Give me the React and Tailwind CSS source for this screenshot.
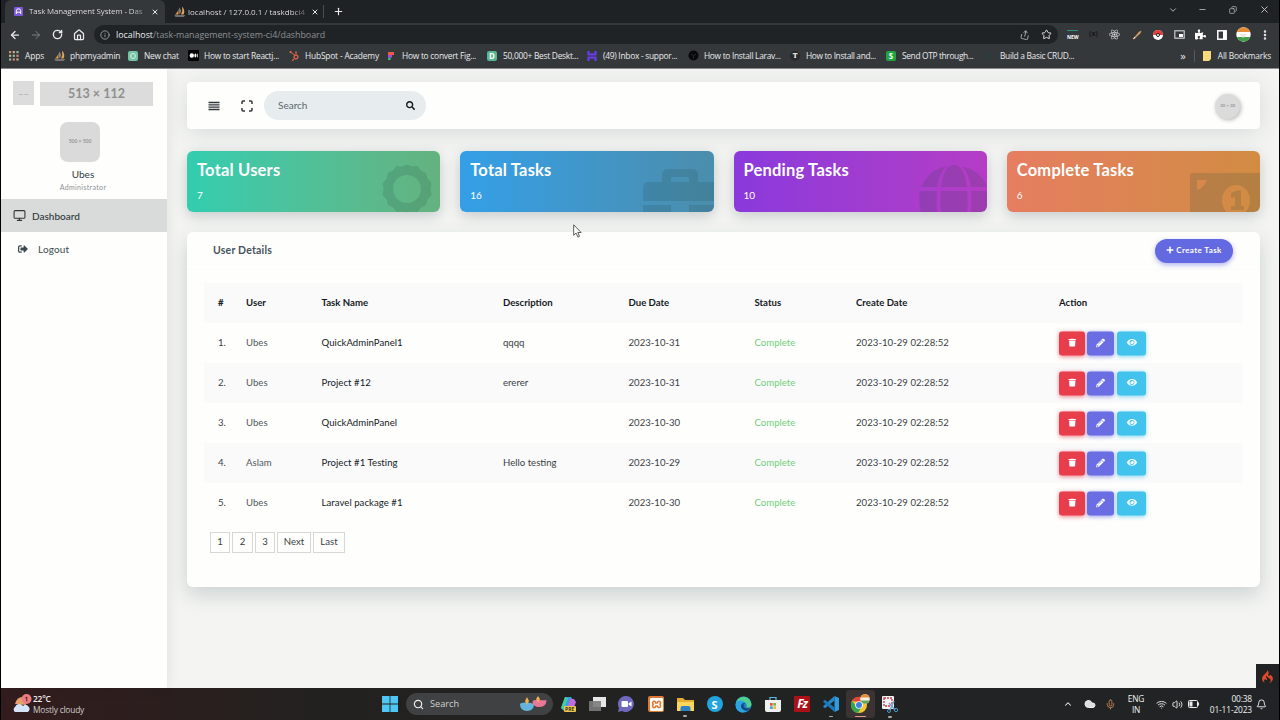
import React from "react";
import {
  FaTrash, FaPencilAlt, FaEye, FaPlus, FaSearch, FaSignOutAlt, FaHubspot,
  FaReact, FaPuzzlePiece,
} from "react-icons/fa";
import { SiCodeigniter, SiXampp } from "react-icons/si";
import {
  ArrowLeft, ArrowRight, RotateCw, House, Info, Share, Star, ChevronDown, ChevronUp,
  Minus, X, Plus, Copy, EllipsisVertical, Monitor, Search, Wifi, Volume2,
  Bell, Mic, Cloud,
} from "lucide-react";

const UI = "font-['Open_Sans','Noto_Sans',sans-serif]";

function Tab({ active, icon, title, width, tracking }) {
  return (
    <div className={`flex h-[23px] items-center pl-[9px] ${width} ${active ? "rounded-t-[6px] bg-[#35383a]" : ""}`}>
      <span className="flex w-[15px] shrink-0 items-center">{icon}</span>
      <span className={`flex-1 whitespace-nowrap bg-gradient-to-r from-[#e8eaed] from-88% to-[#e8eaed50] bg-clip-text text-transparent ${tracking}`}>
        {title}
      </span>
      <X size={8} strokeWidth={3} className="mx-[6px] shrink-0 text-[#e8eaed]" />
    </div>
  );
}

const sail = (
  <svg width="12" height="11" viewBox="0 0 12 11">
    <path d="M4.500.5Q5 5 1 8.500h3.500z" fill="#e39a48" />
    <path d="M5.300 1.500Q8 5 5.500 8.500z" fill="#b8b4ab" />
    <path d="M8 .5q3.500 4 1.500 8H7Q9 5 8 .5z" fill="#e0a35c" />
    <path d="M.3 9.200h11l-1.500 1.500H1.500z" fill="#8d8a84" />
  </svg>
);
const tile = (cls, ch) => (
  <span className={`flex h-[10px] w-[10px] items-center justify-center rounded-[2px] text-[8px] font-bold leading-none text-white ${cls}`}>{ch}</span>
);

const bookmarks = [
  { w: "w-[45px]", t: "Apps", tr: "tracking-[-0.1px]", icon: (
    <svg width="10" height="10" viewBox="0 0 10 10">
      {[0, 1, 2].map((r) => [0, 1, 2].map((c) => (
        <rect key={`${r}${c}`} x={c * 3.7} y={r * 3.7} width="2.2" height="2.2" fill={["#d98880", "#c9b27c", "#8fb996"][(r + c) % 3]} />
      )))}
    </svg>
  ) },
  { w: "w-[74px]", t: "phpmyadmin", tr: "tracking-[-0.18px]", icon: sail },
  { w: "w-[60px]", t: "New chat", tr: "tracking-[-0.2px]", icon: tile("bg-[#74c3a4]", <span className="h-[6px] w-[6px] rounded-full border border-white/70" />) },
  { w: "w-[101px]", t: "How to start Reactj...", tr: "tracking-[-0.25px]", icon: (
    <svg width="11" height="11" viewBox="0 0 11 11"><rect width="11" height="11" rx="1" fill="#000" /><circle cx="3.8" cy="5.5" r="2.2" fill="#fff" /><ellipse cx="7.4" cy="5.5" rx="1" ry="2" fill="#fff" /><rect x="9" y="3.7" width=".7" height="3.6" fill="#fff" /></svg>
  ) },
  { w: "w-[97px]", t: "HubSpot - Academy", tr: "tracking-[-0.18px]", icon: <FaHubspot size={10} className="text-[#e8674a]" /> },
  { w: "w-[101px]", t: "How to convert Fig...", tr: "tracking-[-0.25px]", icon: (
    <svg width="10" height="10" viewBox="0 0 10 10"><path d="M2 1h6v3H2z" fill="#ee5a4a" /><path d="M2 4h4v2.6H2z" fill="#a54be0" /><path d="M2 6.6h2.6V9H2z" fill="#35b979" /></svg>
  ) },
  { w: "w-[100px]", t: "50,000+ Best Deskt...", tr: "tracking-[-0.27px]", icon: tile("bg-[#58b893]", "D") },
  { w: "w-[101px]", t: "(49) Inbox - suppor...", tr: "tracking-[-0.27px]", icon: (
    <svg width="10" height="10" viewBox="0 0 10 10" stroke="#673de6" strokeWidth="2.2" fill="none"><path d="M1.5 0v3.300h7V0M1.500 10V6.700h7V10" /></svg>
  ) },
  { w: "w-[102px]", t: "How to Install Larav...", tr: "tracking-[-0.3px]", icon: (
    <svg width="11" height="11" viewBox="0 0 11 11"><circle cx="5.5" cy="5.5" r="5" fill="#08090a" /><path d="M3 4.200 5.500 5.800 8 4.200M5.500 5.800V9" stroke="#333" strokeWidth=".7" fill="none" /></svg>
  ) },
  { w: "w-[96px]", t: "How to Install and...", tr: "tracking-[-0.35px]", icon: tile("rounded-full bg-[#27292b] font-serif", "T") },
  { w: "w-[98px]", t: "Send OTP through...", tr: "tracking-[-0.35px]", icon: tile("bg-[#1fa53f]", "S") },
  { w: "w-[100px]", t: "Build a Basic CRUD...", tr: "tracking-[-0.3px]", icon: <span className="ml-[1px] h-[7px] w-[7px] rounded-full border border-[#24414a]" /> },
];

function Browser() {
  return (
    <header className={`${UI} bg-[#1f2224] text-[#e8eaed]`}>
      <div className="flex h-[23px] items-center pl-[4px]">
        <Tab active width="w-[160px]" tracking="text-[7.900px] tracking-[-0.12px]" title="Task Management System - Das"
          icon={<svg width="9" height="9" viewBox="0 0 9 9"><rect width="9" height="9" rx="1" fill="#7a57dd" /><path d="M2.300 7V3.800a2.200 2 0 0 1 4.400 0V7M2.300 5.200h4.400" stroke="#fff" strokeWidth="1" fill="none" /></svg>} />
        <Tab width="w-[158px]" tracking="-ml-px text-[8px]" title="localhost / 127.0.0.1 / taskdbci4" icon={sail} />
        <span className="h-[13px] w-px bg-[#4b4e50]" />
        <Plus size={11} strokeWidth={2.500} className="ml-[9px]" />
        <div className="ml-auto mb-[4px] flex items-center pr-[9px] text-[#c9cccf]">
          <ChevronDown size={10} />
          <Minus size={9} className="ml-[20px]" />
          <Copy size={8} className="ml-[22px] -scale-x-100" />
          <X size={11} className="ml-[22px]" />
        </div>
      </div>
      <div className="flex h-[23px] items-center bg-[#35383a] pl-[8px]">
        <ArrowLeft size={12} strokeWidth={2.500} />
        <ArrowRight size={12} className="ml-[9px] text-[#7d8083]" />
        <RotateCw size={11} strokeWidth={3} className="ml-[10px]" />
        <House size={12} strokeWidth={2.500} className="ml-[10px]" />
        <div className="ml-[9px] flex h-[19px] w-[964px] items-center rounded-full bg-[#202325] pl-[6px] pr-[6px]">
          <Info size={10} className="text-[#a9acaf]" />
          <span className="ml-[6px] text-[8.900px] tracking-[-0.02px] text-[#8b9194]"><span className="text-[#e8eaed]">localhost</span>/task-management-system-ci4/dashboard</span>
          <Share size={10} className="ml-auto rotate-12 text-[#b0b3b6]" />
          <Star size={11} className="ml-[11px]" />
        </div>
        <div className="flex flex-1 items-center">
          <span className="ml-[9px] flex h-[10px] w-[11px] flex-col justify-end border-t border-[#2f8f83] text-[5px] font-bold leading-[5px] text-white">NEW</span>
          <span className="ml-[10px] w-[11px] text-center text-[7px] font-bold text-[#151718]">(x)</span>
          <FaReact size={11} className="ml-[10px]" />
          <svg width="10" height="10" viewBox="0 0 10 10" className="ml-[12px]"><path d="M1 9 7 2.200 9 1 8.200 3.200 2.500 8.600z" fill="#d9a066" stroke="#d9a066" strokeWidth=".6" /><path d="M1 9l1.500-2L3.400 8z" fill="#fff" /></svg>
          <svg width="12" height="12" viewBox="0 0 12 12" className="ml-[10px]"><circle cx="6" cy="6" r="5" fill="#fff" /><path d="M1 6a5 5 0 0 1 10 0z" fill="#e23b3b" /><circle cx="6" cy="6" r="1.500" fill="#fff" stroke="#222" /></svg>
          <svg width="11" height="9" viewBox="0 0 11 9" className="ml-[10px]"><rect width="11" height="9" rx="1" fill="#aeb1b4" /><rect x="1.500" y="1.500" width="8" height="6" fill="#35383a" /><rect x="5" y="4" width="4" height="3" fill="#fff" /></svg>
          <FaPuzzlePiece size={11} className="ml-[10px] text-white" />
          <svg width="10" height="10" viewBox="0 0 10 10" className="ml-[11px]"><rect x=".8" y=".8" width="8.400" height="8.400" fill="none" stroke="#fff" strokeWidth="1.500" /><rect x="6" y="1" width="3" height="8" fill="#fff" /></svg>
          <svg width="15" height="15" viewBox="0 0 15 15" className="ml-[9px]"><circle cx="7.500" cy="7.500" r="7.200" fill="#fff" /><path d="M.8 5a7.200 7.200 0 0 1 13.400 0z" fill="#e88b35" /><path d="M.8 10a7.200 7.200 0 0 0 13.400 0z" fill="#43a047" /><path d="M4 7h7l-4 4z" fill="#ece4d8" /></svg>
          <EllipsisVertical size={12} strokeWidth={3} className="ml-[8px]" />
        </div>
      </div>
      <div className="flex h-[23px] items-center border-b border-[#8d8d90] bg-[#35383a] pb-[2px] pl-[8px] text-[8.400px]">
        {bookmarks.map((b) => (
          <div key={b.t} className={`flex shrink-0 items-center whitespace-nowrap ${b.w}`}>
            <span className="flex w-[16px] shrink-0">{b.icon}</span>
            <span className={b.tr}>{b.t}</span>
          </div>
        ))}
        <span className="ml-auto -mt-[2px] mr-[8px] text-[11px] leading-none">»</span>
        <span className="h-[12px] w-px bg-[#55585b]" />
        <svg width="9" height="10" viewBox="0 0 9 10" className="ml-[8px]"><path d="M0 0h8v8l-2 2H0z" fill="#f8da7c" /></svg>
        <span className="ml-[6px] mr-[8px] tracking-[-0.2px]">All Bookmarks</span>
      </div>
    </header>
  );
}

function Sidebar() {
  return (
    <aside className="relative z-10 flex w-[166px] shrink-0 flex-col bg-[#fefefc] pt-[12px] shadow-[2px_0_12px_rgba(0,0,0,0.07)]">
      <div className="flex pl-[12px]">
        <div className="flex h-[24px] w-[21px] items-center justify-center bg-[#dcdcdc] text-[6px] tracking-tighter text-[#888]">— —</div>
        <div className="ml-[6px] mt-[1px] flex h-[24px] w-[113px] items-center justify-center bg-[#dcdcdc] text-[12.500px] font-bold text-[#8f8f8f]">513 × 112</div>
      </div>
      <div className="ml-[59px] mt-[16px] flex h-[40px] w-[40px] items-center justify-center rounded-[8px] bg-[#dadada] text-[5px] font-bold text-[#999]">500 × 500</div>
      <div className="mt-[5px] pr-[2px] text-center text-[10px] leading-[14px] text-[#2f3a44]">Ubes</div>
      <div className="h-[18px] pr-[2px] text-center text-[7px] leading-[13px] tracking-[0.350px] text-[#8d9196]">Administrator</div>
      <div className="flex h-[33px] items-center bg-[#d8dbda] pl-[12px] text-[10px] font-medium text-[#2f3739]">
        <Monitor size={13} strokeWidth={2} />
        <span className="ml-[6px] mt-[2px]">Dashboard</span>
      </div>
      <div className="flex h-[34px] items-center pl-[17px] text-[10px] text-[#3c4a50]">
        <FaSignOutAlt size={10} />
        <span className="ml-[10px] mt-[1px] tracking-[0.120px]">Logout</span>
      </div>
    </aside>
  );
}

const cards = [
  { title: "Total Users", n: 7, cls: "from-[#31cdb0] to-[#64b27f]", art: (
    <g transform="translate(220 38)">
      <path fillRule="evenodd" d="M0-24.500 5-22.500 10.500-23 14-18.500 19-16 20.500-10.500 24.500-6 23.500 0 24.500 6 20.500 10.500 19 16 14 18.500 10.500 23 5 22.500 0 24.500-5 22.500-10.500 23-14 18.500-19 16-20.500 10.500-24.500 6-23.500 0-24.500-6-20.500-10.500-19-16-14-18.500-10.500-23-5-22.500ZM0-14a14 14 0 1 0 0 28 14 14 0 1 0 0-28Z" />
    </g>
  ) },
  { title: "Total Tasks", n: 16, cls: "from-[#339fe7] to-[#4b8dac]", art: (
    <path fillRule="evenodd" d="M188 31h14v-7q0-6 6-6h24q6 0 6 6v7h16v19H183V37q0-6 5-6zM211 26v5h18v-5zM183 54h28v7h-28zM229 54h25v7h-25z" />
  ) },
  { title: "Pending Tasks", n: 10, cls: "from-[#8a39dc] to-[#b53cc5]", art: (
    <path d="M187.500 36Q194 19 212 15.500 205 23 203 36zM207 36Q210 14 220 14T233 36zM228 15.500Q246 19 253 36H237Q235 23 228 15.500zM186 40h17q-1 10 0 21h-16q-3-11-1-21zM207 40h26q1 10 0 21h-26q-1-11 0-21zM237 40h17v21h-17q1-11 0-21z" />
  ) },
  { title: "Complete Tasks", n: 6, cls: "from-[#e67d60] to-[#d18c42]", art: (
    <g>
      <path fillRule="evenodd" d="M183 25q0-3 3-3h68v39h-71zM190 29v10q7-2 10-10zM229 34a14 15.500 0 1 0 .01 31 14 15.500 0 1 0-.01-31z" />
      <path d="M224 42 230 39.500h4V55h3v4h-13v-4h4v-9l-4 1z" />
    </g>
  ) },
];

function StatCard({ title, n, cls, art }) {
  return (
    <div className={`relative h-[61px] overflow-hidden rounded-[6px] bg-gradient-to-r ${cls}`}>
      <svg className="absolute inset-0" width="254" height="61" viewBox="0 0 254 61" fill="#1d4440" fillOpacity="0.16">{art}</svg>
      <div className="relative pl-[10px] pt-[9px] text-white">
        <div className="text-[16.500px] font-bold leading-[20px] tracking-[0.200px]">{title}</div>
        <div className="mt-[8px] text-[10px] leading-[14px]">{n}</div>
      </div>
    </div>
  );
}

const rows = [
  ["1.", "Ubes", "QuickAdminPanel1", "qqqq", "2023-10-31"],
  ["2.", "Ubes", "Project #12", "ererer", "2023-10-31"],
  ["3.", "Ubes", "QuickAdminPanel", "", "2023-10-30"],
  ["4.", "Aslam", "Project #1 Testing", "Hello testing", "2023-10-29"],
  ["5.", "Ubes", "Laravel package #1", "", "2023-10-30"],
];
const COLS = "grid h-[40px] grid-cols-[42px_75.5px_181.5px_125.5px_126px_101.5px_203px_1fr] items-center";

function Actions() {
  const base = "flex h-[24px] items-center justify-center rounded-[3px] pb-[2px] text-white";
  return (
    <div className="flex">
      <span className={`${base} w-[26px] bg-[#e83e4b] shadow-[0_1px_4px_rgba(232,62,75,0.6)]`}><FaTrash size={8.5} /></span>
      <span className={`${base} ml-[2px] w-[27px] bg-[#6b6ee3] shadow-[0_1px_4px_rgba(107,110,227,0.6)]`}><FaPencilAlt size={9} /></span>
      <span className={`${base} ml-[3px] w-[29px] bg-[#41c3ee] shadow-[0_1px_4px_rgba(65,195,238,0.6)]`}><FaEye size={10} /></span>
    </div>
  );
}

function Main() {
  return (
    <main className="flex flex-1 flex-col pl-[20px] pr-[19px] pt-[13px]">
      <div className="flex h-[47px] items-center rounded-[4px] bg-[#fefefc] pl-[21px] shadow-[0_4px_24px_rgba(30,50,60,0.13)]">
        <svg width="12" height="10" viewBox="0 0 12 10" stroke="#32373a" strokeWidth="1.3"><path d="M.5 1.500h11M.5 3.800h11M.5 6.200h11M.5 8.500h11" /></svg>
        <svg width="12" height="12" viewBox="0 0 12 12" className="ml-[21px]" fill="none" stroke="#32373a" strokeWidth="1.500"><path d="M1 4V2q0-1 1-1h2M8 1h2q1 0 1 1v2M11 8v2q0 1-1 1H8M4 11H2q-1 0-1-1V8" /></svg>
        <div className="ml-[11px] flex h-[29px] w-[162px] items-center rounded-full bg-[#e7edee] pl-[14px] pr-[11px] text-[10px] text-[#5b666d]">
          <span>Search</span>
          <FaSearch size={9} className="ml-auto text-[#15191b]" />
        </div>
        <div className="ml-auto mr-[20px] mt-[1px] flex h-[25px] w-[25px] items-center justify-center rounded-full bg-[#dbdbdb] text-[4.500px] font-bold text-[#999] shadow-[1px_1px_4px_rgba(0,0,0,0.3)]">30 × 30</div>
      </div>
      <div className="mt-[22px] grid grid-cols-4 gap-[20px] [&>div]:shadow-[0_4px_14px_rgba(30,50,60,0.22)]">
        {cards.map((c) => <StatCard key={c.title} {...c} />)}
      </div>
      <section className="mt-[20px] h-[355px] rounded-[6px] bg-[#fefefc] shadow-[0_8px_20px_rgba(30,50,60,0.18)]">
        <div className="flex h-[38px] items-center border-b border-[#fbfbf8] pl-[26px] pr-[27px]">
          <h2 className="text-[10.5px] font-bold tracking-[0.2px] text-[#47545c]">User Details</h2>
          <button className="ml-auto flex h-[24px] w-[78px] items-center justify-center rounded-full bg-[#6269e1] pb-[2px] text-[8px] font-bold tracking-[0.4px] text-white shadow-[0_2px_5px_rgba(98,105,225,0.5)]">
            <FaPlus size={8} className="mr-[2px]" />Create Task
          </button>
        </div>
        <div className="mx-[17px] mt-[13px] text-[9.6px] text-[#3a3f45] [&_span]:translate-y-[0.4px]">
          <div className={`${COLS} bg-[#fafafb] font-bold text-[#15191d]`}>
            <span className="pl-[14px]">#</span><span>User</span><span>Task Name</span><span>Description</span><span>Due Date</span><span>Status</span><span>Create Date</span><span>Action</span>
          </div>
          {rows.map((r, i) => (
            <div key={r[0]} className={`${COLS} ${i % 2 ? "bg-[#fafafb]" : ""}`}>
              <span className="pl-[14px]">{r[0]}</span>
              <span className="text-[#53585a]">{r[1]}</span>
              <span className="tracking-[0.04px] text-[#15191d]">{r[2]}</span>
              <span>{r[3]}</span>
              <span>{r[4]}</span>
              <span className="text-[#72cf79]">Complete</span>
              <span className="tracking-[0.03px]">2023-10-29 02:28:52</span>
              <Actions />
            </div>
          ))}
        </div>
        <div className="ml-[23px] mt-[9px] flex gap-[2px] text-[9.6px] text-[#3a3f45] [&>span]:flex [&>span]:h-[21px] [&>span]:items-center [&>span]:justify-center [&>span]:border [&>span]:border-[#d6d8d6]">
          <span className="w-[20px]">1</span><span className="w-[21px]">2</span><span className="w-[20px]">3</span><span className="w-[34px]">Next</span><span className="w-[32px]">Last</span>
        </div>
      </section>
      <div className="-mr-[19px] mt-auto flex h-[24px] w-[23px] items-center justify-center self-end bg-[#202223]">
        <SiCodeigniter size={13} className="text-[#dc4a2c]" />
      </div>
    </main>
  );
}

function Taskbar() {
  const dot = "after:absolute after:-bottom-[5px] after:left-1/2 after:h-[1.5px] after:w-[4px] after:-translate-x-1/2 after:rounded after:bg-[#a9a9a9] after:content-['']";
  return (
    <footer className={`${UI} flex h-[32px] items-center bg-gradient-to-r from-[#331c1d] via-[#22211f] via-25% to-[#212426] pl-[11px] text-[8.4px] text-[#f1f1f1]`}>
      <svg width="20" height="20" viewBox="0 0 20 20"><path d="M3 10q2-8 9-7l2 8z" fill="#e3a26b" /><path d="M3 18a3 3 0 0 1 0-5 4.500 4.500 0 0 1 8-1 3 3 0 0 1 5 6z" fill="#d6e4fa" /><circle cx="14.500" cy="5" r="5" fill="#ee7d83" /><path d="m13.300 4 1.500-1v4.500" stroke="#5d2025" fill="none" /></svg>
      <div className="ml-[1px] w-[348px] leading-[11px]"><div className="font-semibold tracking-[-0.2px]">22°C</div><div className="tracking-[-0.2px] text-[#d0cdcd]">Mostly cloudy</div></div>
      <svg className="ml-[1px]" width="16" height="16" viewBox="0 0 16 16" fill="#50c6f4"><path d="M0 0h7.600v7.600H0zM8.400 0H16v7.600H8.400zM0 8.400h7.600V16H0zM8.400 8.400H16V16H8.400z" /></svg>
      <div className="ml-[8px] flex h-[22px] w-[147px] items-center rounded-full bg-[#3f4142] pl-[7px] pr-[6px]">
        <Search size={11} strokeWidth={2.5} /><span className="ml-[6px] text-[9.2px] text-[#d0d0d0]">Search</span>
        <svg className="ml-auto" width="27" height="16" viewBox="0 0 27 16"><path d="M0 8q1-2 7-1.500T14 8q0 7-7 7T0 8z" fill="#63b4dd" /><path d="M12.500 5q1-1.500 7-1t7 0q0 7-7 7t-7-6z" fill="#eb7798" /><path d="m7 1 2 4-2 4-2-4zM18 0l2 3-2 4-2-4z" fill="#edb04f" /></svg>
      </div>
      <div className="ml-[1px] flex h-full items-center [&>span]:relative [&>span]:flex [&>span]:w-[29.2px] [&>span]:shrink-0 [&>span]:justify-center">
        <span><svg width="17" height="17" viewBox="0 0 17 17"><path d="M5 1h6l2 3-4 11H4l-3-3z" fill="#3a9be8" /><path d="M5 1 1 12l3 2 4-12z" fill="#43cf9a" /><path d="M10 3h4l2 3-3 8H7z" fill="#c46adf" /><rect x="4" y="10" width="12" height="6" rx="1" fill="#f3c64d" /><text x="5" y="15" fontSize="5" fontWeight="bold" fill="#332">PRE</text></svg></span>
        <span><svg width="17" height="16" viewBox="0 0 17 16"><path d="M4 1h13v10H4z" fill="#e6e6e6" /><path d="M0 5h12v10H0z" fill="#7b7b7b" fillOpacity=".9" /></svg></span>
        <span><svg width="17" height="16" viewBox="0 0 17 16"><path d="M8 0a8 8 0 1 1-4 15l-4 1 1-4a8 8 0 0 1 7-12z" fill="#6f68bd" /><rect x="3.500" y="5" width="6.500" height="6" rx="1" fill="#fff" /><path d="m10.500 7.500 3-2v5l-3-2z" fill="#fff" /></svg></span>
        <span><span className="flex h-[16px] w-[16px] items-center justify-center rounded-[2px] bg-[#df7a36]"><SiXampp size={13} className="text-white" /></span></span>
        <span className={dot}><svg width="17" height="15" viewBox="0 0 17 15"><path d="M0 1h6l2 2h9v11H0z" fill="#e6ad2e" /><path d="M0 5h17v9H0z" fill="#fbd65b" /><path d="M3.500 14v-3q0-2 2-2h6q2 0 2 2v3z" fill="#2c82c4" /></svg></span>
        <span><span className="flex h-[16px] w-[16px] items-center justify-center rounded-full bg-[#24a4dd] text-[11px] font-bold leading-none text-white">S</span></span>
        <span><svg width="17" height="17" viewBox="0 0 17 17"><circle cx="8.500" cy="8.500" r="8" fill="#1e80c9" /><path d="M1 6a8 8 0 0 1 15.500 2q0 4-5 3.500 1-6-5-6-3 0-5.500 3z" fill="#4fd091" /><path d="M1 6q4-3 9 .5-4-.5-4 4 1 4 7 4-4 3-8 1.500T.5 9z" fill="#2aa4e4" /><path d="M10 7q-3 2 0 5l5 .5q-2 3-5 2-4-1-4-5 1-3 4-2.500z" fill="#174a78" /></svg></span>
        <span><svg width="16" height="17" viewBox="0 0 16 17"><path d="M5 5V1.500h6V5" stroke="#62b8e4" strokeWidth="1.200" fill="none" /><path d="M0 4h16v10q0 2-2 2H2q-2 0-2-2z" fill="#f0f0f0" /><path d="M5 7h2.700v2.700H5z" fill="#e05a38" /><path d="M8.300 7H11v2.700H8.300z" fill="#7bb13c" /><path d="M5 10.300h2.700V13H5z" fill="#38a4e0" /><path d="M8.300 10.300H11V13H8.300z" fill="#f0b93a" /></svg></span>
        <span><span className="flex h-[16px] w-[16px] items-center justify-center rounded-[1px] bg-[#ad1118] text-[12px] font-bold italic leading-none tracking-[-1px] text-white">Fz</span></span>
        <span className={dot}><svg width="16" height="16" viewBox="0 0 16 16"><path d="M11.500 0 16 2v12l-4.500 2z" fill="#2f9ce0" /><path d="M11.500 0v4.500L2 12.300.3 11v-1z" fill="#2489cb" /><path d="M11.500 16v-4.500L2 3.700.3 5v1z" fill="#1b78bb" /></svg></span>
        <span className="h-[28px] items-center rounded-[3px] bg-[#3a3233] after:absolute after:bottom-[1px] after:left-[9px] after:h-[1.5px] after:w-[11px] after:rounded after:bg-[#dd9a8d] after:content-['']">
          <svg width="20" height="20" viewBox="0 0 20 20"><circle cx="9" cy="11" r="8" fill="#f5c532" /><path d="M2 7a8 8 0 0 1 14.500 1H9z" fill="#e34435" /><path d="M2 7a8 8 0 0 0 6 12l4-6.500-6-1z" fill="#35a552" /><circle cx="9" cy="11" r="3.800" fill="#fff" /><circle cx="9" cy="11" r="3" fill="#3f80e4" /><circle cx="15" cy="5" r="4.800" fill="#f4f0e6" /><path d="M10.500 3.500a4.800 4.800 0 0 1 9 0z" fill="#e88b35" /><path d="M10.500 6.500a4.800 4.800 0 0 0 9 0z" fill="#5fa851" /></svg>
        </span>
        <span className={dot}><svg width="17" height="17" viewBox="0 0 17 17"><rect x="1" y="0" width="12" height="13" rx="1" fill="#f4f4f4" /><rect x="3" y="2" width="8" height="8" fill="none" stroke="#c93b4c" strokeWidth="1.400" strokeDasharray="2 1" /><path d="m8 7 6 7M13 5l-4 9" stroke="#73a8c8" strokeWidth="1.500" /><circle cx="15" cy="14" r="1.700" fill="none" stroke="#4b96ca" /><circle cx="8" cy="15" r="1.500" fill="none" stroke="#4b96ca" /></svg></span>
      </div>
      <div className="ml-auto flex items-center pr-[12px]">
        <ChevronUp size={10} strokeWidth={2.5} />
        <Cloud size={12} className="ml-[11px] fill-[#dfdfdf]" />
        <Mic size={11} className="ml-[9px] text-[#c28155]" />
        <div className="ml-[10px] w-[20px] text-center leading-[11px] tracking-[-0.2px]"><div>ENG</div><div>IN</div></div>
        <Wifi size={11} className="ml-[10px]" />
        <Volume2 size={11} className="ml-[5px]" />
        <svg width="11" height="8" viewBox="0 0 11 8" className="ml-[5px]"><rect x=".5" y=".5" width="9" height="7" rx="1" fill="none" stroke="#eee" /><rect x="1.500" y="1.500" width="3" height="5" fill="#eee" /><rect x="10" y="2.500" width="1" height="3" fill="#eee" /></svg>
        <div className="ml-[9px] w-[44px] whitespace-nowrap text-right leading-[11px] tracking-[-0.15px]"><div>00:38</div><div>01-11-2023</div></div>
        <Bell size={11} className="ml-[4px]" />
      </div>
    </footer>
  );
}

export default function App() {
  return (
    <div className="relative flex h-[720px] w-[1280px] flex-col overflow-hidden border-l border-r border-black font-[Lato,'Open_Sans',sans-serif]">
      <Browser />
      <div className="flex h-[619px] bg-[#f4f5f3]">
        <Sidebar />
        <Main />
      </div>
      <Taskbar />
      <svg className="absolute left-[572px] top-[224px]" width="9" height="14" viewBox="0 0 9 14"><path d="M.7.8v10.500l2.400-2.200 1.800 4 1.600-.8L4.800 8.500h3.300z" fill="#fff" stroke="#333" strokeWidth=".8" /></svg>
    </div>
  );
}
